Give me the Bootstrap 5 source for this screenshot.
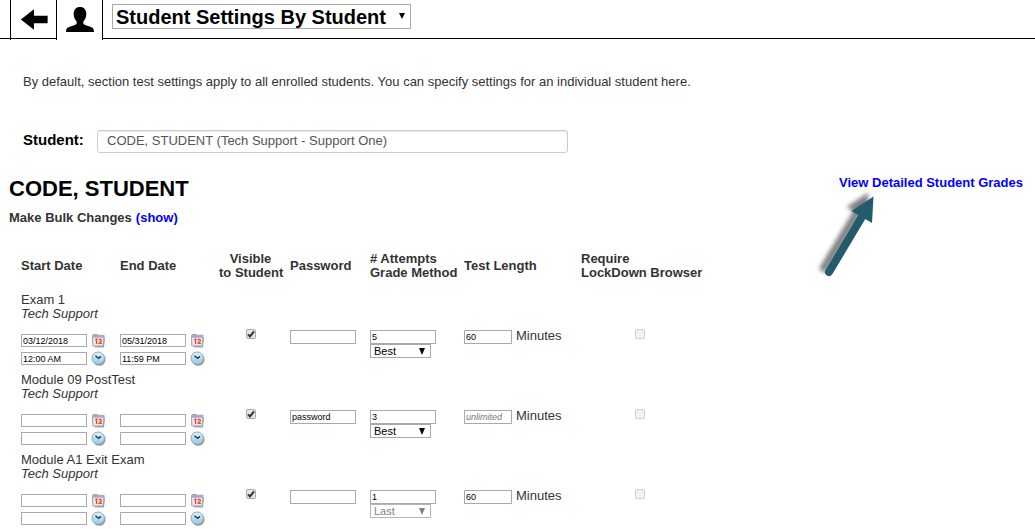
<!DOCTYPE html>
<html lang="en">
<head>
<meta charset="utf-8">
<meta name="viewport" content="width=device-width, initial-scale=1">
<title>Student Settings By Student</title>
<link href="https://cdn.jsdelivr.net/npm/bootstrap@5.3.0/dist/css/bootstrap.min.css" rel="stylesheet">
<style>
  body { font-family: "Liberation Sans", Arial, sans-serif; font-size: 13px; line-height: 14px; color: #333; background: #fff; }
  a { color: #00f; text-decoration: none; font-weight: bold; }
  .topbar { height: 40px; }
  .spacer-start { width: 10px; height: 39px; border-bottom: 1px solid #000; }
  .tab-link { width: 46px; height: 40px; border-left: 1px solid #000; color: #000; }
  .tab-link svg { display: block; }
  .tab-back svg { border-bottom: 1px solid #000; }
  .topbar-main { height: 39px; border-bottom: 1px solid #000; padding: 4px 9px; }
  .topbar-edge { width: 1px; background: #000; }
  select { appearance: none; background: #fff no-repeat; border: 1px solid #a9a9a9; border-radius: 0; }
  .page-select { width: 299px; height: 25px; padding: 1px 3px 0; font-size: 20px; line-height: 22px; font-weight: bold; color: #000;
    background-image: url("data:image/svg+xml,%3Csvg xmlns='http://www.w3.org/2000/svg' width='6' height='6'%3E%3Cpath d='M0 0h6L3 6z'/%3E%3C/svg%3E"); background-position: right 5px top 8px; }
  .intro { padding: 35px 23px 0; }
  .student-row { padding: 41px 23px 0; }
  .student-row label { width: 74px; font-size: 15px; line-height: 20px; font-weight: bold; color: #000; }
  .student-box { width: 100%; max-width: 471px; height: 23px; padding: 0 9px 2px; font-size: 13px; color: #555; border: 1px solid #ccc; border-radius: 3px; box-shadow: inset 0 1px 1px rgba(0,0,0,.08); }
  .heading-row { padding: 23px 12px 0 9px; }
  .student-name { font-size: 22px; line-height: 26px; font-weight: bold; color: #000; }
  .bulk { padding: 9px 9px 0; }
  .pointer { right: 140px; top: 36px; pointer-events: none; }
  .settings { table-layout: fixed; width: 678px; margin: 27px 0 0 21px; }
  .settings th { padding: 0 0 6px; vertical-align: middle; }
  .settings td { padding: 0 0 1px; vertical-align: top; }
  .settings .exam-name { padding: 7px 0 0; }
  .settings .date-cell { padding-top: 13px; }
  .settings .field-cell { padding-top: 9px; }
  .settings .check-cell { padding-top: 8px; }
  .minutes { line-height: 12px; }
  .field { height: 14px; width: 66px; padding: 0 1px; border: 1px solid #a9a9a9; border-radius: 0; background: #fff; font-size: 9px; line-height: 12px; color: #000; display: block; }
  .field::placeholder { color: #777; font-style: italic; opacity: 1; }
  .field-date { height: 13px; }
  .field-short { width: 48px; }
  .grade { display: block; width: 61px; height: 14px; padding: 0 3px; font-size: 11px; line-height: 12px; color: #000;
    background-image: url("data:image/svg+xml,%3Csvg xmlns='http://www.w3.org/2000/svg' width='6' height='7'%3E%3Cpath d='M0 0h6L3 7z'/%3E%3C/svg%3E"); background-position: right 5px top 3px; }
  .grade:disabled { color: #808080; opacity: 1; border-color: #b5b5b5;
    background-image: url("data:image/svg+xml,%3Csvg xmlns='http://www.w3.org/2000/svg' width='6' height='7'%3E%3Cpath fill='%23808080' d='M0 0h6L3 7z'/%3E%3C/svg%3E"); }
  .tick { appearance: none; display: block; width: 10px; height: 10px; margin: 0 auto; border: 1px solid #aaa; border-radius: 2px; background: linear-gradient(#eee, #ddd); }
  .tick:checked { background: url("data:image/svg+xml,%3Csvg xmlns='http://www.w3.org/2000/svg' width='8' height='8'%3E%3Cpath d='M1 4.4l2 2L7 1.4' fill='none' stroke='%23333' stroke-width='2'/%3E%3C/svg%3E") #e6e6e6; }
  .tick:disabled { border-color: #d0d0d0; background: #f2f2f2; }
  .picker { width: 15px; height: 15px; padding: 0; border: 0; background: none; margin: -1px 0; display: block; }
  .picker svg { display: block; }
</style>
</head>
<body>
<svg width="0" height="0" class="position-absolute" aria-hidden="true">
  <defs>
    <linearGradient id="face" x1="0" y1="0" x2="0" y2="1"><stop offset="0" stop-color="#e2f4fa"/><stop offset="1" stop-color="#8fc9e4"/></linearGradient>
    <symbol id="i-cal" viewBox="0 0 15 15">
      <path d="M4 3.500l10 1L13 14.500H4z" fill="#77727c" opacity=".65"/>
      <path d="M1.500 2.500L3 1.500h3l1 .8h6l-.5 10.700H1.800z" fill="#e9e9f5" stroke="#9c9cba"/>
      <path d="M1.200 2.500L3 1.500h3l1 .8h6l-.2 2.400H1.200z" fill="#a8a9ca"/>
      <path d="M4.200 7l1.400-.9V11M7.800 7.300c.6-1.400 3-1.100 2.500.4-.3 1-1.900 1.600-2.200 2.700h3" fill="none" stroke="#f4511e" stroke-width="1.400"/>
    </symbol>
    <symbol id="i-clock" viewBox="0 0 15 15">
      <circle cx="8.300" cy="8.500" r="6.300" fill="#666" opacity=".65"/>
      <circle cx="7.200" cy="7.200" r="6.200" fill="url(#face)" stroke="#86a9bd"/>
      <path d="M4.400 4.800l3.200 2.600L10 5.400" fill="none" stroke="#263c50" stroke-width="1.400"/>
    </symbol>
  </defs>
</svg>

<header class="topbar d-flex align-items-start">
  <div class="spacer-start"></div>
  <a href="#" class="tab-link tab-back" aria-label="Back">
    <svg width="45" height="39" viewBox="0 0 45 39"><path d="M9.500 20L23 9.500v6.700H37v7.600H23v6.700z" fill="#000"/></svg>
  </a>
  <a href="#" class="tab-link" aria-label="Student">
    <svg width="45" height="38" viewBox="0 0 45 38"><path d="M23 7c4 0 6.300 2.700 6.300 7 0 3.300-1.200 5.500-2.800 7.300-.6 1.700-.2 2.800 1.500 3.600l6 2c2.200.8 3 2.300 3 5.100H9c0-2.800.8-4.300 3-5.100l6-2c1.700-.8 2.100-1.900 1.500-3.600C17.900 19.500 16.700 17.300 16.700 14c0-4.300 2.300-7 6.300-7z" fill="#000"/></svg>
  </a>
  <div class="topbar-edge align-self-stretch"></div>
  <div class="topbar-main flex-grow-1">
    <select class="page-select d-block" aria-label="Page"><option>Student Settings By Student</option></select>
  </div>
</header>

<main>
  <p class="intro mb-0">By default, section test settings apply to all enrolled students. You can specify settings for an individual student here.</p>
  <div class="student-row d-flex">
    <label for="student" class="flex-shrink-0">Student:</label>
    <input id="student" class="student-box" type="text" value="CODE, STUDENT (Tech Support - Support One)">
  </div>
  <div class="heading-row d-flex justify-content-between align-items-start position-relative">
    <h1 class="student-name mb-0">CODE, STUDENT</h1>
    <a href="#">View Detailed Student Grades</a>
    <svg class="pointer position-absolute" width="80" height="90" viewBox="0 0 80 90" aria-hidden="true">
      <defs><filter id="soft" x="-30%" y="-30%" width="160%" height="160%"><feGaussianBlur stdDeviation="2"/></filter></defs>
      <g transform="translate(-5 -4)" fill="#555" stroke="#555" opacity=".75" filter="url(#soft)">
        <path d="M58.500 7.500L57 34 36.500 22z" stroke="none"/><path d="M14 83L48 26" stroke-width="8" stroke-linecap="round"/>
      </g>
      <path d="M58.500 7.500L57 34 36.500 22z" fill="#225b6b"/><path d="M14 83L48 26" stroke="#225b6b" stroke-width="8" stroke-linecap="round"/>
    </svg>
  </div>
  <div class="bulk d-flex gap-1 fw-bold"><span>Make Bulk Changes</span><a href="#">(show)</a></div>

  <table class="settings">
    <colgroup><col style="width:99px"><col style="width:99px"><col style="width:71px"><col style="width:80px"><col style="width:94px"><col style="width:117px"><col style="width:118px"></colgroup>
    <thead>
      <tr><th>Start Date</th><th>End Date</th><th class="text-center text-nowrap pe-2">Visible<br>to Student</th><th>Password</th><th class="text-nowrap"># Attempts<br>Grade Method</th><th>Test Length</th><th class="text-nowrap">Require<br>LockDown Browser</th></tr>
    </thead>
    <tbody id="rows"></tbody>
  </table>
</main>

<script>
  const exams = [
    { name: 'Exam 1', start: ['03/12/2018', '12:00 AM'], end: ['05/31/2018', '11:59 PM'], password: '', attempts: 5, grade: 'Best', length: '60' },
    { name: 'Module 09 PostTest', start: ['', ''], end: ['', ''], password: 'password', attempts: 3, grade: 'Best', length: '' },
    { name: 'Module A1 Exit Exam', start: ['', ''], end: ['', ''], password: '', attempts: 1, grade: 'Last', length: '60' }
  ];
  const line = (value, icon, label) => `<div class="d-flex gap-1"><input class="field field-date" type="text" value="${value}" aria-label="${label}"><button type="button" class="picker" aria-label="Pick ${label}"><svg width="15" height="15"><use href="#${icon}"/></svg></button></div>`;
  const dates = (pair, label) => `<td class="date-cell"><div class="d-grid" style="gap:5px">${line(pair[0], 'i-cal', label + ' date')}${line(pair[1], 'i-clock', label + ' time')}</div></td>`;
  document.getElementById('rows').innerHTML = exams.map(e => `
    <tr><td colspan="7" class="exam-name">${e.name}<br><em>Tech Support</em></td></tr>
    <tr>${dates(e.start, 'start')}${dates(e.end, 'end')}
      <td class="check-cell pe-2"><input class="tick" type="checkbox" checked aria-label="Visible to student"></td>
      <td class="field-cell"><input class="field" type="text" value="${e.password}" aria-label="Password"></td>
      <td class="field-cell"><input class="field" type="text" value="${e.attempts}" aria-label="Attempts"><select class="grade" aria-label="Grade method"${e.grade === 'Last' ? ' disabled' : ''}><option>${e.grade}</option></select></td>
      <td class="field-cell"><label class="minutes d-flex gap-1"><input class="field field-short" type="text" value="${e.length}" placeholder="unlimited"> Minutes</label></td>
      <td class="check-cell"><input class="tick" type="checkbox" disabled aria-label="Require LockDown Browser"></td></tr>`).join('');
</script>
<script src="https://cdn.jsdelivr.net/npm/bootstrap@5.3.0/dist/js/bootstrap.bundle.min.js"></script>
</body>
</html>
